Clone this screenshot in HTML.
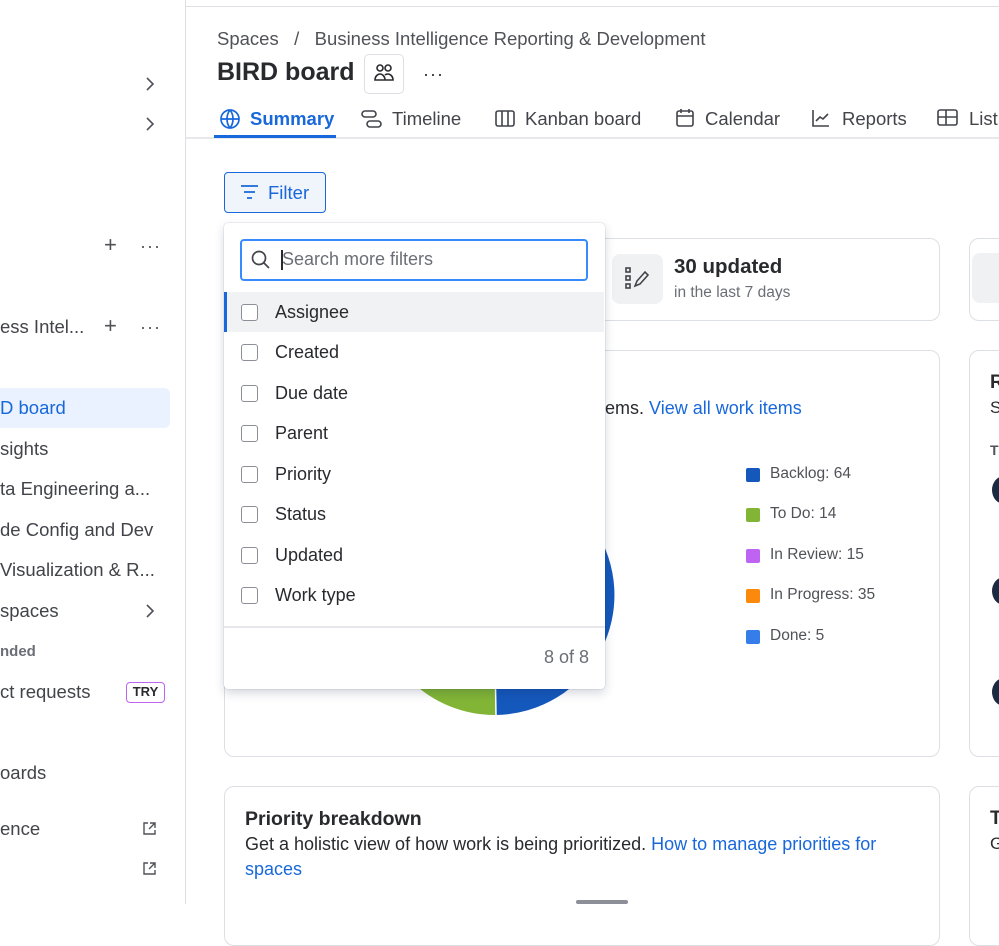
<!DOCTYPE html>
<html><head><meta charset="utf-8"><style>
*{box-sizing:border-box;margin:0;padding:0}
body{width:999px;height:904px;overflow:hidden;background:#fff;font-family:"Liberation Sans",sans-serif;color:#292a2e;position:relative}
.a{position:absolute;white-space:nowrap}
.sb{font-size:18.5px;color:#42444a}
.card{position:absolute;border:1px solid #dcdfe4;border-radius:10px;background:#fff}
.row{position:absolute;left:0;width:380px;height:40px;font-size:18px;display:flex;align-items:center}
.cb{width:17px;height:17px;border:1.5px solid #8c8f97;border-radius:3px;margin-left:17px;margin-right:17px;background:#fff}
.lg{position:absolute;left:746px;font-size:15.5px;color:#505258}
.lg i{position:absolute;left:0;top:3px;width:14px;height:14px;border-radius:2px}
.lg span{margin-left:24px}
</style></head><body>
<!-- sidebar -->
<div class="a" style="left:185px;top:0;width:1px;height:904px;background:#dcdfe4"></div>
<div class="a" style="left:186px;top:6px;width:813px;height:1px;background:#dcdfe4"></div>
<svg class="a" style="left:143px;top:76px" width="14" height="16" viewBox="0 0 14 16"><path d="M4 2l6 6-6 6" fill="none" stroke="#505258" stroke-width="1.6"/></svg>
<svg class="a" style="left:143px;top:116px" width="14" height="16" viewBox="0 0 14 16"><path d="M4 2l6 6-6 6" fill="none" stroke="#505258" stroke-width="1.6"/></svg>
<div class="a" style="left:104px;top:232px;font-size:22px;color:#505258">+</div>
<div class="a" style="left:140px;top:236px;font-size:18px;color:#505258;letter-spacing:1px">···</div>
<div class="a sb" style="left:0;top:316px">ess Intel...</div>
<div class="a" style="left:104px;top:313px;font-size:22px;color:#505258">+</div>
<div class="a" style="left:140px;top:317px;font-size:18px;color:#505258;letter-spacing:1px">···</div>
<div class="a" style="left:0;top:388px;width:170px;height:40px;background:#e9f2fe;border-radius:0 6px 6px 0"></div>
<div class="a sb" style="left:0;top:397px;color:#1868db">D board</div>
<div class="a sb" style="left:0;top:438px">sights</div>
<div class="a sb" style="left:0;top:478px">ta Engineering a...</div>
<div class="a sb" style="left:0;top:519px">de Config and Dev</div>
<div class="a sb" style="left:0;top:559px">Visualization &amp; R...</div>
<div class="a sb" style="left:0;top:600px">spaces</div>
<svg class="a" style="left:143px;top:603px" width="14" height="16" viewBox="0 0 14 16"><path d="M4 2l6 6-6 6" fill="none" stroke="#505258" stroke-width="1.6"/></svg>
<div class="a" style="left:0;top:643px;font-size:15px;font-weight:bold;color:#6b6e76">nded</div>
<div class="a sb" style="left:0;top:681px">ct requests</div>
<div class="a" style="left:126px;top:682px;width:39px;height:21px;border:1.5px solid #bf63f3;border-radius:4px;font-size:13px;font-weight:bold;text-align:center;line-height:18px">TRY</div>
<div class="a sb" style="left:0;top:762px">oards</div>
<div class="a sb" style="left:0;top:818px">ence</div>
<svg class="a" style="left:142px;top:821px" width="15" height="15" viewBox="0 0 15 15" fill="none" stroke="#505258" stroke-width="1.4"><path d="M6 2H2v11h11V9M8 2h5v5M13 2L7 8"/></svg>
<svg class="a" style="left:142px;top:861px" width="15" height="15" viewBox="0 0 15 15" fill="none" stroke="#505258" stroke-width="1.4"><path d="M6 2H2v11h11V9M8 2h5v5M13 2L7 8"/></svg>
<!-- header -->
<div class="a" style="left:217px;top:28px;font-size:18.5px;color:#505258">Spaces&nbsp;&nbsp;&nbsp;/&nbsp;&nbsp;&nbsp;Business Intelligence Reporting &amp; Development</div>
<div class="a" style="left:217px;top:58px;font-size:25px;font-weight:bold;color:#292a2e">BIRD board</div>
<div class="a" style="left:364px;top:54px;width:40px;height:40px;border:1px solid #dcdfe4;border-radius:5px"></div>
<svg class="a" style="left:373px;top:62px" width="22" height="22" viewBox="0 0 22 22" fill="none" stroke="#292a2e" stroke-width="1.6"><circle cx="7" cy="6" r="3"/><circle cx="15" cy="6" r="3"/><path d="M2 18c0-4 3-6 5-6s5 2 5 6zM12 13c1-1 2-1 3-1 2 0 5 2 5 6h-8"/></svg>
<div class="a" style="left:423px;top:64px;font-size:18px;letter-spacing:1px">···</div>
<div class="a" style="left:186px;top:137px;width:813px;height:2px;background:#e6e8eb"></div>
<svg class="a" style="left:219px;top:108px" width="22" height="22" viewBox="0 0 22 22" fill="none" stroke="#1868db" stroke-width="1.7"><circle cx="11" cy="11" r="9"/><path d="M2 11h18M11 2c-4 5-4 13 0 18M11 2c4 5 4 13 0 18"/></svg>
<div class="a" style="left:250px;top:108px;font-size:18.5px;font-weight:bold;color:#1868db">Summary</div>
<div class="a" style="left:214px;top:135px;width:122px;height:3px;background:#1868db"></div>
<svg class="a" style="left:361px;top:110px" width="22" height="18" viewBox="0 0 22 18" fill="none" stroke="#42444a" stroke-width="1.6"><rect x="1" y="1" width="14" height="6" rx="3"/><rect x="6" y="11" width="14" height="6" rx="3"/></svg>
<div class="a" style="left:392px;top:108px;font-size:18.5px;color:#42444a">Timeline</div>
<svg class="a" style="left:495px;top:110px" width="20" height="18" viewBox="0 0 20 18" fill="none" stroke="#42444a" stroke-width="1.6"><rect x="1" y="1" width="18" height="15" rx="2"/><path d="M7 1v15M13 1v15"/></svg>
<div class="a" style="left:525px;top:108px;font-size:18.5px;color:#42444a">Kanban board</div>
<svg class="a" style="left:675px;top:108px" width="20" height="20" viewBox="0 0 20 20" fill="none" stroke="#42444a" stroke-width="1.6"><rect x="2" y="3" width="16" height="15" rx="2"/><path d="M2 8h16M6 1v4M14 1v4"/></svg>
<div class="a" style="left:705px;top:108px;font-size:18.5px;color:#42444a">Calendar</div>
<svg class="a" style="left:811px;top:108px" width="20" height="20" viewBox="0 0 20 20" fill="none" stroke="#42444a" stroke-width="1.6"><path d="M2 2v16h16M5 13l4-4 3 2 5-5"/></svg>
<div class="a" style="left:842px;top:108px;font-size:18.5px;color:#42444a">Reports</div>
<svg class="a" style="left:937px;top:109px" width="22" height="18" viewBox="0 0 22 18" fill="none" stroke="#42444a" stroke-width="1.6"><rect x="1" y="1" width="19" height="15" rx="2"/><path d="M1 8h19M9 1v15"/></svg>
<div class="a" style="left:969px;top:108px;font-size:18.5px;color:#42444a">List</div>
<!-- filter btn -->
<div class="a" style="left:224px;top:172px;width:102px;height:41px;border:1.5px solid #1868db;border-radius:4px;background:#f0f4fb"></div>
<svg class="a" style="left:240px;top:184px" width="20" height="18" viewBox="0 0 20 18" stroke="#1868db" stroke-width="1.8"><path d="M1 2h17M4 8h11M7 14h5"/></svg>
<div class="a" style="left:268px;top:182px;font-size:18.5px;color:#1868db">Filter</div>
<!-- cards -->
<div class="card" style="left:224px;top:238px;width:716px;height:83px"></div>
<div class="a" style="left:612px;top:254px;width:51px;height:50px;background:#f0f1f2;border-radius:8px"></div>
<svg class="a" style="left:624px;top:266px" width="28" height="28" viewBox="0 0 28 28" fill="none" stroke="#42444a" stroke-width="1.6"><rect x="2" y="2" width="4" height="4"/><rect x="2" y="10" width="4" height="4"/><rect x="2" y="18" width="4" height="4"/><path d="M11 20l2-5 8-9 3 3-8 9z"/></svg>
<div class="a" style="left:674px;top:255px;font-size:20.5px;font-weight:bold">30 updated</div>
<div class="a" style="left:674px;top:284px;font-size:15.5px;color:#6b6e76">in the last 7 days</div>
<div class="card" style="left:969px;top:238px;width:60px;height:83px"></div>
<div class="a" style="left:972px;top:253px;width:40px;height:50px;background:#f0f1f2;border-radius:8px"></div>
<div class="card" style="left:224px;top:350px;width:716px;height:407px"></div>
<div class="a" style="left:600px;top:398px;font-size:18px">tems. <span style="color:#1868db">View all work items</span></div>
<svg class="a" style="left:372px;top:473px" width="244" height="244" viewBox="0 0 244 244">
<path d="M122 122 L222 55 A120 120 0 0 1 124 242 Z" fill="#1558bc"/>
<path d="M122 122 L124 242 A120 120 0 0 1 38 207 Z" fill="#82b536"/>
<path d="M122 122 L38 207 A120 120 0 0 1 28 196 Z" fill="#bf63f3"/>
<path d="M124 242 L122 122" stroke="#fff" stroke-width="1.5"/>
<path d="M38 207 L122 122" stroke="#fff" stroke-width="1.5"/>
</svg>
<div class="lg" style="top:465px"><i style="background:#1558bc"></i><span>Backlog: 64</span></div>
<div class="lg" style="top:505px"><i style="background:#82b536"></i><span>To Do: 14</span></div>
<div class="lg" style="top:546px"><i style="background:#bf63f3"></i><span>In Review: 15</span></div>
<div class="lg" style="top:586px"><i style="background:#fb8a0c"></i><span>In Progress: 35</span></div>
<div class="lg" style="top:627px"><i style="background:#357de8"></i><span>Done: 5</span></div>
<div class="card" style="left:969px;top:350px;width:60px;height:407px"></div>
<div class="a" style="left:990px;top:372px;font-size:19px;font-weight:bold">R</div>
<div class="a" style="left:990px;top:398px;font-size:17px">S</div>
<div class="a" style="left:990px;top:442px;font-size:14px;font-weight:bold;color:#505258">T</div>
<div class="a" style="left:992px;top:476px;width:24px;height:28px;border-radius:50%;background:#1c2b41"></div>
<div class="a" style="left:992px;top:577px;width:24px;height:28px;border-radius:50%;background:#1c2b41"></div>
<div class="a" style="left:992px;top:678px;width:24px;height:28px;border-radius:50%;background:#1c2b41"></div>
<div class="card" style="left:224px;top:786px;width:716px;height:160px"></div>
<div class="a" style="left:245px;top:808px;font-size:19.5px;font-weight:bold">Priority breakdown</div>
<div class="a" style="left:245px;top:832px;font-size:18px;line-height:25px;white-space:normal;width:680px">Get a holistic view of how work is being prioritized. <span style="color:#1868db">How to manage priorities for spaces</span></div>
<div class="a" style="left:576px;top:900px;width:52px;height:4px;background:#8c8f97;border-radius:2px"></div>
<div class="card" style="left:969px;top:786px;width:60px;height:160px"></div>
<div class="a" style="left:990px;top:808px;font-size:19px;font-weight:bold">T</div>
<div class="a" style="left:990px;top:834px;font-size:17px">G</div>
<!-- dropdown -->
<div class="a" style="left:224px;top:223px;width:381px;height:466px;background:#fff;border-radius:4px;box-shadow:0 4px 10px rgba(9,30,66,.18),0 0 1px rgba(9,30,66,.35)">
 <div class="a" style="left:16px;top:16px;width:348px;height:42px;border:2px solid #388bff;border-radius:4px"></div>
 <svg class="a" style="left:27px;top:27px" width="20" height="20" viewBox="0 0 20 20" fill="none" stroke="#42444a" stroke-width="1.7"><circle cx="8" cy="8" r="6.5"/><path d="M13 13l5 5"/></svg>
 <div class="a" style="left:57px;top:27px;width:1.5px;height:20px;background:#292a2e"></div>
 <div class="a" style="left:58px;top:26px;font-size:18px;color:#6b6e76">Search more filters</div>
 <div class="row" style="top:69px;background:#f1f2f4"><div class="a" style="left:0;top:0;width:3px;height:40px;background:#1868db"></div><div class="cb"></div>Assignee</div>
 <div class="row" style="top:109px"><div class="cb"></div>Created</div>
 <div class="row" style="top:150px"><div class="cb"></div>Due date</div>
 <div class="row" style="top:190px"><div class="cb"></div>Parent</div>
 <div class="row" style="top:231px"><div class="cb"></div>Priority</div>
 <div class="row" style="top:271px"><div class="cb"></div>Status</div>
 <div class="row" style="top:312px"><div class="cb"></div>Updated</div>
 <div class="row" style="top:352px"><div class="cb"></div>Work type</div>
 <div class="a" style="left:0;top:403px;width:381px;height:2px;background:#e6e8eb"></div>
 <div class="a" style="right:16px;top:424px;font-size:18px;color:#6b6e76">8 of 8</div>
</div>
</body></html>
